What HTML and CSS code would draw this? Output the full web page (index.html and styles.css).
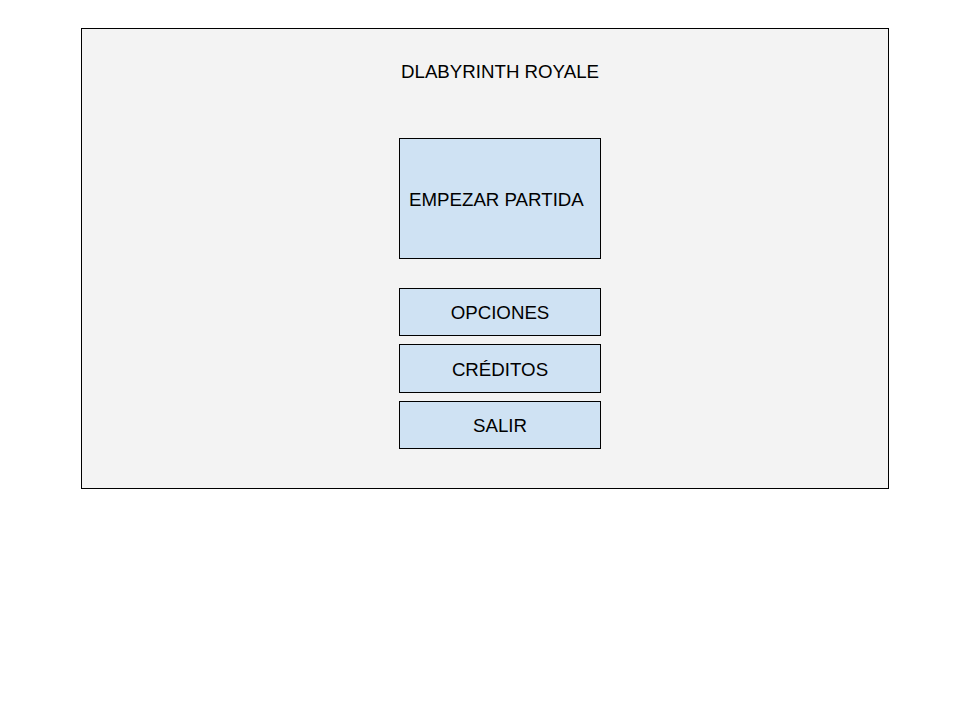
FILE: index.html
```html
<!DOCTYPE html>
<html lang="es">
<head>
  <meta charset="UTF-8">
  <title>DLabyrinth Royale</title>
  <link rel="stylesheet" href="styles.css">
</head>
<body>
  <div class="screen">
    <div class="menu">
      <h1 class="title">DLABYRINTH ROYALE</h1>
      <button class="menu-btn start-btn">EMPEZAR PARTIDA</button>
      <button class="menu-btn">OPCIONES</button>
      <button class="menu-btn tall">CRÉDITOS</button>
      <button class="menu-btn">SALIR</button>
    </div>
  </div>
</body>
</html>
```

FILE: styles.css
```css
/* General */
body {
  margin: 0;
  background: #ffffff;
  font-family: 'Liberation Sans', Arial, sans-serif;
  color: #000000;
}

/* Main screen frame */
.screen {
  margin: 28px 0 0 81px;
  width: 489px;
  height: 459px;
  border: 1px solid #000000;
  background: #f3f3f3;
  padding-left: 317px;
}

.menu {
  width: 202px;
  display: flex;
  flex-direction: column;
  align-items: stretch;
  padding-top: 33px;
}

.title {
  margin: 0 -20px 56px;
  font-size: 18.7px;
  font-weight: normal;
  line-height: 20px;
  text-align: center;
}

/* Buttons */
.menu-btn {
  height: 48px;
  margin: 0 0 8px;
  padding: 2px 0 0;
  border: 1px solid #000000;
  background: #cfe2f3;
  font-family: inherit;
  font-size: 18.7px;
  color: #000000;
  text-align: center;
}

.menu-btn.tall {
  height: 49px;
}

.start-btn {
  height: 121px;
  margin-bottom: 29px;
  padding-left: 9px;
  text-align: left;
}
```
